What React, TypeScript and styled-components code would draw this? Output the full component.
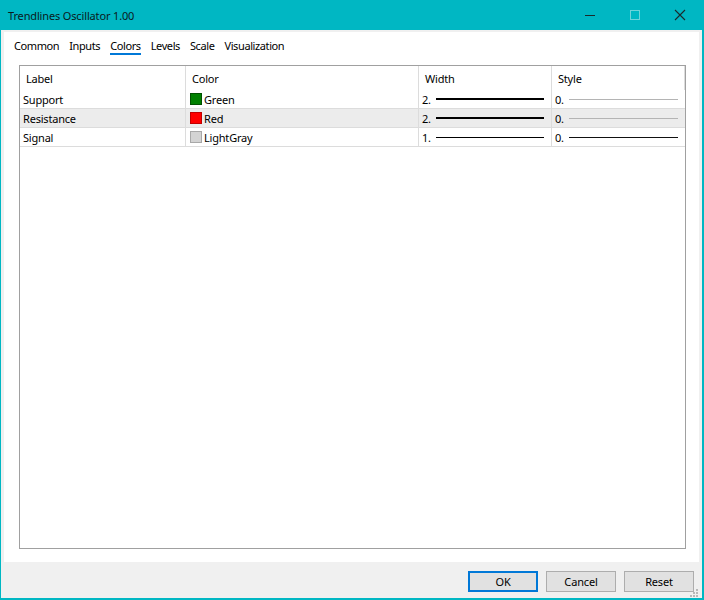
import React from "react";
import styled, { createGlobalStyle } from "styled-components";

const Global = createGlobalStyle`
  html, body { margin: 0; padding: 0; background: #ffffff; }
  body { font-family: "Noto Sans", "Open Sans", sans-serif; font-size: 11px; color: #000; }
  * { box-sizing: border-box; }
`;

const TEAL = "#00b7c3";

const Window = styled.div`
  width: 704px;
  height: 600px;
  display: flex;
  flex-direction: column;
  border-left: 1px solid ${TEAL};
  border-right: 2px solid ${TEAL};
  border-bottom: 2px solid ${TEAL};
  background: #f0f0f0;
`;

const TitleBar = styled.div`
  height: 30px;
  flex: none;
  background: ${TEAL};
  display: flex;
  align-items: center;
  padding-left: 7px;
  padding-right: 0;
`;

const Title = styled.div`
  flex: 1;
  font-size: 11px;
  color: #0a1a1c;
  letter-spacing: -0.15px;
`;

const Controls = styled.div`
  display: flex;
  height: 30px;
`;

const CtrlButton = styled.div`
  width: 45px;
  height: 30px;
  display: flex;
  align-items: center;
  justify-content: center;
`;

const Body = styled.div`
  flex: 1;
  display: flex;
  flex-direction: column;
  padding: 2px 3px 0 3px;
`;

const Panel = styled.div`
  height: 530px;
  background: #ffffff;
  display: flex;
  flex-direction: column;
`;

const Tabs = styled.div`
  display: flex;
  height: 25px;
  padding-left: 10px;
  gap: 10px;
  align-items: flex-start;
`;

const Tab = styled.div<{ $active?: boolean }>`
  padding-top: 6px;
  height: 23px;
  font-size: 11px;
  letter-spacing: -0.4px;
  color: #000;
  border-bottom: 2px solid ${(p) => (p.$active ? "#0078d7" : "transparent")};
`;

const TableBox = styled.div`
  margin: 8px 13px 0 15px;
  height: 484px;
  border: 1px solid #a0a0a0;
  background: #fff;
`;

const Grid = styled.div`
  display: grid;
  grid-template-columns: 166px 233px 133px 1fr;
`;

const HeadCell = styled.div`
  height: 24px;
  padding: 5px 0 0 6px;
  border-right: 1px solid #dcdcdc;
  font-size: 11px;
  letter-spacing: -0.2px;
  &:last-child { border-right: none; }
`;

const Cell = styled.div<{ $shade?: boolean }>`
  height: 19px;
  display: flex;
  align-items: center;
  padding-left: 3px;
  padding-right: 7px;
  background: ${(p) => (p.$shade ? "#ececec" : "#fff")};
  border-right: 1px solid #dcdcdc;
  border-bottom: 1px solid #dcdcdc;
  font-size: 11px;
  letter-spacing: -0.2px;
  white-space: nowrap;
  &:nth-child(4n) { border-right: none; }
`;

const Swatch = styled.span<{ $color: string; $edge: string }>`
  width: 12px;
  height: 12px;
  margin: 0 2px 0 1px;
  background: ${(p) => p.$color};
  border: 1px solid ${(p) => p.$edge};
  flex: none;
`;

const Num = styled.span`
  width: 14px;
  flex: none;
`;

const Line = styled.span<{ $w: number; $c: string }>`
  flex: 1;
  height: ${(p) => p.$w}px;
  background: ${(p) => p.$c};
`;

const Footer = styled.div`
  flex: 1;
  display: flex;
  justify-content: flex-end;
  align-items: flex-start;
  padding: 9px 5px 0 0;
  gap: 8px;
  position: relative;
`;

const Button = styled.div<{ $primary?: boolean }>`
  width: 70px;
  height: 21px;
  display: flex;
  align-items: center;
  justify-content: center;
  background: #e1e1e1;
  border: ${(p) => (p.$primary ? "2px solid #0078d7" : "1px solid #adadad")};
  font-size: 11px;
  letter-spacing: -0.15px;
`;

const Grip = styled.svg`
  position: absolute;
  right: 0;
  bottom: 0;
`;

const rows = [
  { label: "Support", color: "#008000", edge: "#005000", name: "Green", w: 2, wn: "2.", sc: "#b4b4b4" },
  { label: "Resistance", color: "#ff0000", edge: "#c00000", name: "Red", w: 2, wn: "2.", sc: "#b4b4b4" },
  { label: "Signal", color: "#d3d3d3", edge: "#a8a8a8", name: "LightGray", w: 1, wn: "1.", sc: "#111" },
];

export default function App() {
  return (
    <>
      <Global />
      <Window>
        <TitleBar>
          <Title>Trendlines Oscillator 1.00</Title>
          <Controls>
            <CtrlButton>
              <svg width="12" height="12" viewBox="0 0 12 12">
                <line x1="1" y1="6.5" x2="11" y2="6.5" stroke="#1a2a2c" strokeWidth="1" />
              </svg>
            </CtrlButton>
            <CtrlButton>
              <svg width="12" height="12" viewBox="0 0 12 12">
                <rect x="1.5" y="1.5" width="9" height="9" fill="none" stroke="#6fd3da" strokeWidth="1" />
              </svg>
            </CtrlButton>
            <CtrlButton>
              <svg width="12" height="12" viewBox="0 0 12 12">
                <path d="M1 1 L11 11 M11 1 L1 11" stroke="#1a2a2c" strokeWidth="1.1" />
              </svg>
            </CtrlButton>
          </Controls>
        </TitleBar>
        <Body>
          <Panel>
            <Tabs>
              <Tab>Common</Tab>
              <Tab>Inputs</Tab>
              <Tab $active>Colors</Tab>
              <Tab>Levels</Tab>
              <Tab>Scale</Tab>
              <Tab>Visualization</Tab>
            </Tabs>
            <TableBox>
              <Grid>
                <HeadCell>Label</HeadCell>
                <HeadCell>Color</HeadCell>
                <HeadCell>Width</HeadCell>
                <HeadCell>Style</HeadCell>
                {rows.map((r, i) => (
                  <React.Fragment key={r.label}>
                    <Cell $shade={i === 1}>{r.label}</Cell>
                    <Cell $shade={i === 1}>
                      <Swatch $color={r.color} $edge={r.edge} />
                      {r.name}
                    </Cell>
                    <Cell $shade={i === 1}>
                      <Num>{r.wn}</Num>
                      <Line $w={r.w} $c="#000" />
                    </Cell>
                    <Cell $shade={i === 1}>
                      <Num>0.</Num>
                      <Line $w={1} $c={r.sc} />
                    </Cell>
                  </React.Fragment>
                ))}
              </Grid>
            </TableBox>
          </Panel>
          <Footer>
            <Button $primary>OK</Button>
            <Button>Cancel</Button>
            <Button>Reset</Button>
            <Grip width="10" height="10" viewBox="0 0 10 10">
              <rect x="7" y="7" width="2" height="2" fill="#b8b8b8" />
              <rect x="4" y="7" width="2" height="2" fill="#b8b8b8" />
              <rect x="7" y="4" width="2" height="2" fill="#b8b8b8" />
              <rect x="1" y="7" width="2" height="2" fill="#b8b8b8" />
              <rect x="4" y="4" width="2" height="2" fill="#b8b8b8" />
              <rect x="7" y="1" width="2" height="2" fill="#b8b8b8" />
            </Grip>
          </Footer>
        </Body>
      </Window>
    </>
  );
}
